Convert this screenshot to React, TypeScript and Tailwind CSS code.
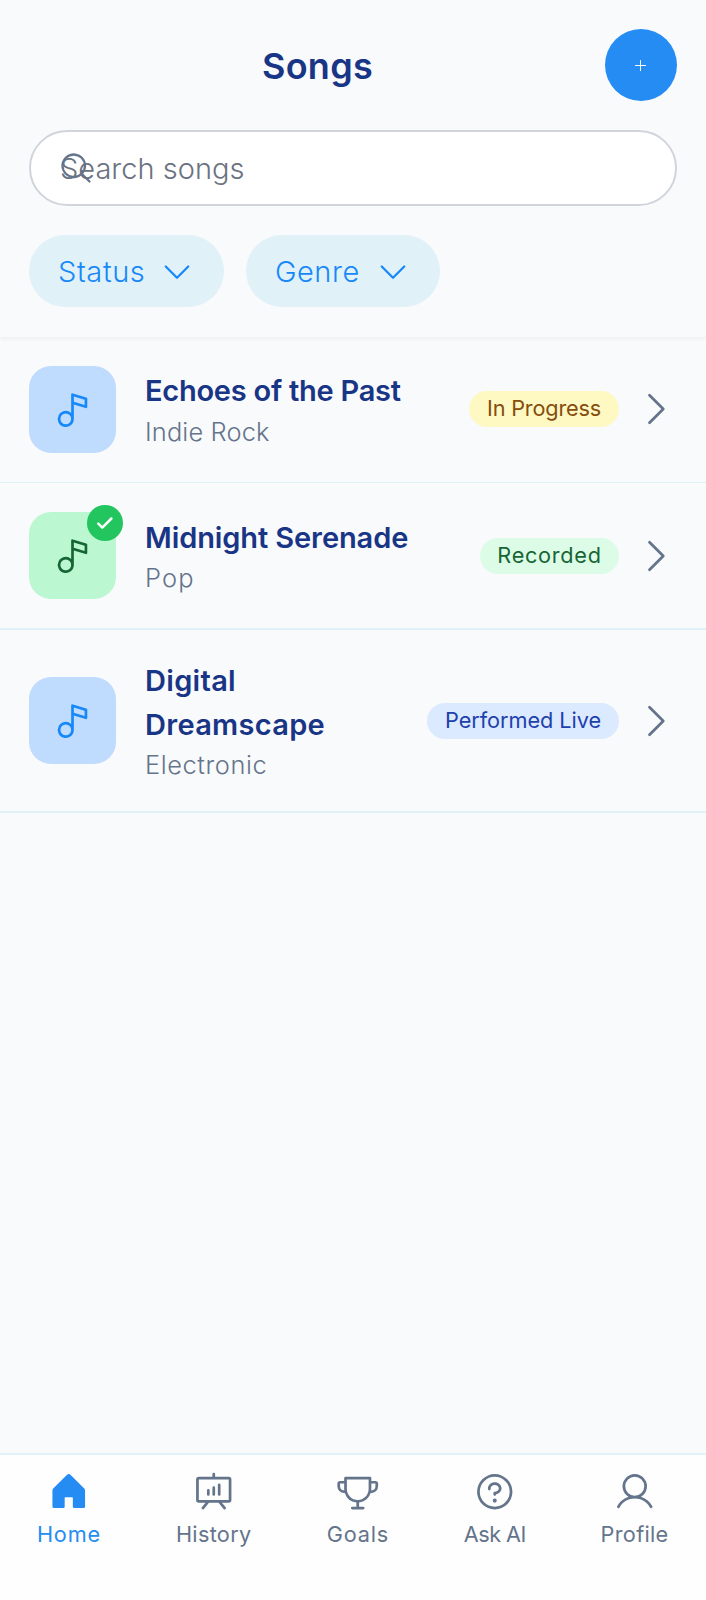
import React from "react";
import type { IconType } from "react-icons";
import {
  PiCaretDown,
  PiCaretRight,
  PiHouseFill,
  PiMagnifyingGlass,
  PiMusicNote,
  PiPlus,
  PiPresentationChart,
  PiQuestion,
  PiTrophy,
  PiUser,
} from "react-icons/pi";

type Song = {
  title: string;
  titleClass: string;
  genre: string;
  genreClass: string;
  status: string;
  badgeClass: string;
  tileClass: string;
  rowClass: string;
  done?: boolean;
};

const songs: Song[] = [
  {
    title: "Echoes of the Past",
    titleClass: "tracking-[-0.25px]",
    genre: "Indie Rock",
    genreClass: "tracking-[0.15px]",
    status: "In Progress",
    badgeClass: "w-[150px] bg-[#fef9c3] text-[#854d0e] tracking-[-0.2px]",
    tileClass: "bg-[#bfdbfe] text-[#1788f8]",
    rowClass: "h-[146px] border-b pb-px",
  },
  {
    title: "Midnight Serenade",
    titleClass: "tracking-[-0.1px]",
    genre: "Pop",
    genreClass: "tracking-[1.2px]",
    status: "Recorded",
    badgeClass: "w-[139px] bg-[#dcfce7] text-[#166534] tracking-[0.7px]",
    tileClass: "bg-[#bbf7d0] text-[#166534]",
    rowClass: "h-[147px] border-b-2",
    done: true,
  },
  {
    title: "Digital Dreamscape",
    titleClass: "tracking-[0.3px]",
    genre: "Electronic",
    genreClass: "tracking-[0.6px]",
    status: "Performed Live",
    badgeClass: "w-[192px] bg-[#dbeafe] text-[#1e40af] tracking-[-0.05px]",
    tileClass: "bg-[#bfdbfe] text-[#1788f8]",
    rowClass: "h-[183px] border-b-2",
  },
];

const tabs: { label: string; Icon: IconType; className: string }[] = [
  { label: "Home", Icon: PiHouseFill, className: "w-[62px] text-[#258cf4] tracking-[0.8px]" },
  { label: "History", Icon: PiPresentationChart, className: "w-[76px] text-[#64748b] tracking-[0.3px]" },
  { label: "Goals", Icon: PiTrophy, className: "w-[61px] text-[#64748b] tracking-[0.8px]" },
  { label: "Ask AI", Icon: PiQuestion, className: "w-[61px] text-[#64748b] tracking-[-0.55px]" },
  { label: "Profile", Icon: PiUser, className: "w-[67px] text-[#64748b] tracking-[0.3px]" },
];

function FilterChip({ label, className }: { label: string; className: string }) {
  return (
    <button
      className={`flex h-[72px] items-center justify-between rounded-full bg-[#e0f1f8] px-[29px] text-[29px] font-light text-[#1788f8] ${className}`}
    >
      <span className="pt-[2px]">{label}</span>
      <PiCaretDown className="size-[36px]" />
    </button>
  );
}

function CheckIcon() {
  return (
    <svg viewBox="0 0 36 36" className="size-9" fill="none" stroke="currentColor" strokeWidth="2.5" strokeLinecap="round" strokeLinejoin="round">
      <path d="M11.3 18.6l4 4 9.1-9.1" />
    </svg>
  );
}

function SongRow({ song }: { song: Song }) {
  return (
    <li className={`flex shrink-0 items-center border-[#e0f2f8] px-[29px] ${song.rowClass}`}>
      <div className={`relative flex size-[87px] shrink-0 items-center justify-center rounded-[22px] ${song.tileClass}`}>
        <PiMusicNote className="size-[43px]" />
        {song.done && (
          <span className="absolute -top-[7px] -right-[7px] flex size-9 items-center justify-center rounded-full bg-[#22c55e] text-white">
            <CheckIcon />
          </span>
        )}
      </div>
      <div className="ml-[29px] min-w-0 flex-1 pr-[13px]">
        <p className={`text-[29px] leading-[43.5px] font-semibold text-[#193586] ${song.titleClass}`}>{song.title}</p>
        <p className={`pt-px text-[25.4px] leading-[35px] font-light text-[#64748b] ${song.genreClass}`}>{song.genre}</p>
      </div>
      <span
        className={`flex h-9 shrink-0 items-center justify-center rounded-full text-[21.7px] leading-none whitespace-nowrap ${song.badgeClass}`}
      >
        {song.status}
      </span>
      <PiCaretRight className="ml-[14px] size-[44px] shrink-0 text-[#64748b]" />
    </li>
  );
}

export default function App() {
  return (
    <div className="flex h-[1600px] w-full flex-col bg-[#f9fafc] font-['Inter',sans-serif]">
      <header className="flex h-[337px] shrink-0 flex-col px-[29px] pt-[29px] shadow-[0_2px_4px_rgba(0,0,0,0.05)]">
        <div className="flex items-center">
          <h1 className="flex-1 pt-[2px] pl-px text-center text-[36px] leading-[45px] font-semibold tracking-[0.3px] text-[#193586]">
            Songs
          </h1>
          <button aria-label="Add song" className="flex size-[72px] items-center justify-center rounded-full bg-[#258cf4] pr-px text-white">
            <PiPlus className="size-[15px]" />
          </button>
        </div>
        <div className="relative mt-[29px]">
          <input
            type="text"
            placeholder="Search songs"
            className="block h-[76px] w-full rounded-full border-2 border-[#d1d5db] bg-white pl-[29px] text-[29px] font-light placeholder:text-[#6b7280] placeholder:opacity-100"
          />
          <PiMagnifyingGlass className="absolute top-[20px] left-[29px] size-[36px] text-[#64748b]" />
        </div>
        <div className="mt-[29px] flex gap-[22px]">
          <FilterChip label="Status" className="w-[195px] tracking-[0.6px]" />
          <FilterChip label="Genre" className="w-[194px] tracking-[0.5px]" />
        </div>
      </header>
      <ul className="flex flex-1 flex-col">
        {songs.map((song) => (
          <SongRow key={song.title} song={song} />
        ))}
      </ul>
      <nav className="flex h-[147px] shrink-0 items-start justify-around border-t-2 border-[#e0f2f8] bg-[#fefefe] pt-[15px]">
        {tabs.map(({ label, Icon, className }) => (
          <a key={label} className={`flex flex-col items-center text-[21.7px] whitespace-nowrap ${className}`}>
            <Icon className="size-[43.5px]" />
            <span className="mt-[6px] leading-[29px]">{label}</span>
          </a>
        ))}
      </nav>
    </div>
  );
}
